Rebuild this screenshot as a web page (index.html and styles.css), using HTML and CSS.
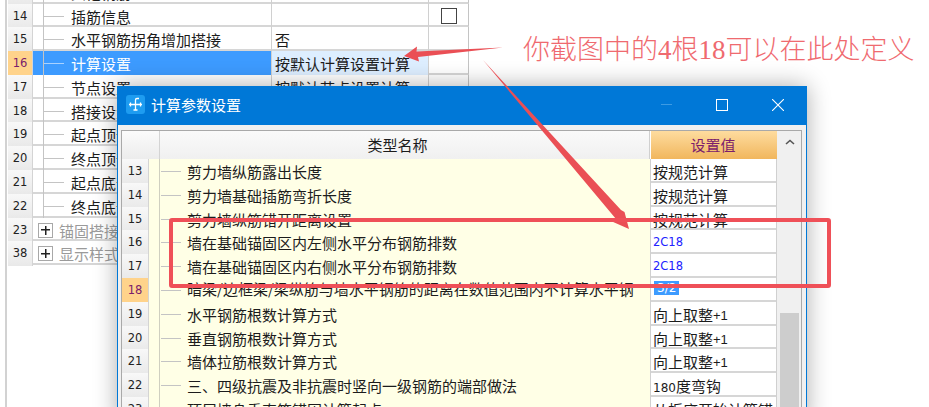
FILE: index.html
```html
<!DOCTYPE html>
<html lang="zh">
<head>
<meta charset="utf-8">
<title>计算参数设置</title>
<link rel="stylesheet" href="styles.css">
</head>
<body>
<main class="panel">
  <div class="row"><div class="num">13</div><div class="tree"></div><div class="name"><i class="branch"></i>其他钢筋</div><div class="val"></div><div class="chk"><span class="box"></span></div></div>
  <div class="row"><div class="num">14</div><div class="tree"></div><div class="name"><i class="branch"></i>插筋信息</div><div class="val"></div><div class="chk"><span class="box"></span></div></div>
  <div class="row"><div class="num">15</div><div class="tree"></div><div class="name"><i class="branch"></i>水平钢筋拐角增加搭接</div><div class="val">否</div><div class="chk"></div></div>
  <div class="row active"><div class="num">16</div><div class="tree"></div><div class="name"><i class="branch"></i>计算设置</div><div class="val">按默认计算设置计算</div><div class="chk"></div></div>
  <div class="row"><div class="num">17</div><div class="tree"></div><div class="name"><i class="branch"></i>节点设置</div><div class="val">按默认节点设置计算</div><div class="chk"></div></div>
  <div class="row"><div class="num">18</div><div class="tree"></div><div class="name"><i class="branch"></i>搭接设置</div><div class="val"></div><div class="chk"></div></div>
  <div class="row"><div class="num">19</div><div class="tree"></div><div class="name"><i class="branch"></i>起点顶部加强</div><div class="val"></div><div class="chk"></div></div>
  <div class="row"><div class="num">20</div><div class="tree"></div><div class="name"><i class="branch"></i>终点顶部加强</div><div class="val"></div><div class="chk"></div></div>
  <div class="row"><div class="num">21</div><div class="tree"></div><div class="name"><i class="branch"></i>起点底部加强</div><div class="val"></div><div class="chk"></div></div>
  <div class="row"><div class="num">22</div><div class="tree"></div><div class="name"><i class="branch"></i>终点底部加强</div><div class="val"></div><div class="chk"></div></div>
  <div class="row group"><div class="num">23</div><div class="grp"><span class="plus"></span>锚固搭接设置</div></div>
  <div class="row group"><div class="num">38</div><div class="grp"><span class="plus"></span>显示样式设置</div></div>
</main>

<section class="dialog">
  <header class="titlebar">
    <svg class="appicon" viewBox="0 0 19 19" width="19" height="19" aria-hidden="true">
      <rect width="19" height="19" rx="3" fill="#1e9cf0"/>
      <path d="M13 3.5H11Q9.5 3.5 9.5 5V15M3 9.5H16M4.5 7.5V11.5M14.5 7.5V11.5M7.5 15H11.5" fill="none" stroke="#fff" stroke-width="1.3"/>
    </svg>
    <span class="title">计算参数设置</span>
    <span class="winbtn"><i class="min"></i></span>
    <span class="winbtn"><i class="max"></i></span>
    <span class="winbtn">
      <svg viewBox="0 0 12 12" width="12" height="12" aria-hidden="true"><path d="M0 0L12 12M12 0L0 12" stroke="#fff" stroke-width="1.1"/></svg>
    </span>
  </header>
  <div class="body">
    <div class="grid">
      <div class="table">
        <div class="drow head"><div class="hnum"></div><div class="hname">类型名称</div><div class="hval">设置值</div></div>
        <div class="drow"><div class="num">13</div><div class="tree"></div><div class="dname"><i class="branch"></i>剪力墙纵筋露出长度</div><div class="dval">按规范计算</div></div>
        <div class="drow"><div class="num">14</div><div class="tree"></div><div class="dname"><i class="branch"></i>剪力墙基础插筋弯折长度</div><div class="dval">按规范计算</div></div>
        <div class="drow"><div class="num">15</div><div class="tree"></div><div class="dname"><i class="branch"></i>剪力墙纵筋错开距离设置</div><div class="dval">按规范计算</div></div>
        <div class="drow"><div class="num">16</div><div class="tree"></div><div class="dname"><i class="branch"></i>墙在基础锚固区内左侧水平分布钢筋排数</div><div class="dval blue">2C18</div></div>
        <div class="drow"><div class="num">17</div><div class="tree"></div><div class="dname"><i class="branch"></i>墙在基础锚固区内右侧水平分布钢筋排数</div><div class="dval blue">2C18</div></div>
        <div class="drow current"><div class="num">18</div><div class="tree"></div><div class="dname"><i class="branch"></i>暗梁/边框梁/梁纵筋与墙水平钢筋的距离在数值范围内不计算水平钢</div><div class="dval"><span class="sel">3/2</span></div></div>
        <div class="drow"><div class="num">19</div><div class="tree"></div><div class="dname"><i class="branch"></i>水平钢筋根数计算方式</div><div class="dval">向上取整<span class="inc">+1</span></div></div>
        <div class="drow"><div class="num">20</div><div class="tree"></div><div class="dname"><i class="branch"></i>垂直钢筋根数计算方式</div><div class="dval">向上取整<span class="inc">+1</span></div></div>
        <div class="drow"><div class="num">21</div><div class="tree"></div><div class="dname"><i class="branch"></i>墙体拉筋根数计算方式</div><div class="dval">向上取整<span class="inc">+1</span></div></div>
        <div class="drow"><div class="num">22</div><div class="tree"></div><div class="dname"><i class="branch"></i>三、四级抗震及非抗震时竖向一级钢筋的端部做法</div><div class="dval"><span class="deg">180</span>度弯钩</div></div>
        <div class="drow"><div class="num">23</div><div class="tree"></div><div class="dname"><i class="branch"></i>顶层墙身垂直筋锚固计算起点</div><div class="dval">从板底开始计算锚</div></div>
      </div>
      <div class="scrollbar">
        <svg class="up" viewBox="0 0 10 6" width="10" height="6" aria-hidden="true"><path d="M1 5L5 1.5L9 5" fill="none" stroke="#555" stroke-width="1.6"/></svg>
        <div class="thumb"></div>
      </div>
    </div>
  </div>
</section>

<svg class="marks" viewBox="0 0 929 407" width="929" height="407" aria-hidden="true">
  <polygon points="404,56 417,46.5 416.5,51.5 503,47.5 418,57 419,61.5" fill="#ea4f55"/>
  <polygon points="483,60 621,210 624.5,212 629,229 612,221.5 616,219" fill="#ea4f55"/>
  <rect x="171" y="220" width="658" height="66" rx="1" fill="none" stroke="#ef5058" stroke-width="4"/>
</svg>
<p class="note">你截图中的4根18可以在此处定义</p>
</body>
</html>
```
FILE: styles.css
```css
html, body {
  margin: 0;
  height: 407px;
  overflow: hidden;
  background: #fff;
}
body {
  position: relative;
  font-family: "Noto Sans CJK SC", "Liberation Sans", sans-serif;
  font-size: 15px;
  color: #1c1c1c;
}
.panel {
  width: 461px;
  height: 430px;
  margin: -20.3px 0 0 5px;
  padding-left: 1px;
  border-left: 2px solid #d2d2d2;
}
.row {
  display: grid;
  grid-template-columns: 25px 11px 228px 157px 39px;
  height: 23.8px;
  box-sizing: border-box;
  border-bottom: 2px solid #d6d6d6;
  line-height: 25px;
  border-right: 1px solid #c4c4c4;
}
.num {
  background: linear-gradient(#f8f8f8, #e9e9e9);
  border-right: 1px solid #d4d4d4;
  text-align: center;
  font-family: "DejaVu Sans", sans-serif;
  font-size: 11.5px;
  line-height: 24px;
  color: #222;
}
.tree {
  border-right: 1px solid #c4c4c4;
}
.name {
  position: relative;
  padding-left: 27px;
  white-space: nowrap;
  overflow: hidden;
  border-right: 1px solid #d0d0d0;
}
.branch {
  position: absolute;
  left: 0;
  top: 12px;
  width: 20px;
  height: 1px;
  background: #c4c4c4;
}
.val {
  padding-left: 3px;
  border-right: 1px solid #d0d0d0;
  white-space: nowrap;
  overflow: hidden;
}
.chk {
  display: flex;
  align-items: center;
  justify-content: center;
}
.box {
  width: 14px;
  height: 14px;
  border: 1px solid #444;
}
.active .num {
  background: #ffd38b;
  color: #7b1d6c;
}
.active .tree,
.active .name {
  background: #3d9bff;
  color: #fff;
}
.active .branch {
  background: #a9d2ff;
}
.active .val {
  background: #ddeeff;
}
.group {
  grid-template-columns: 25px 1fr;
}
.grp {
  display: flex;
  align-items: center;
  gap: 6px;
  padding-left: 5px;
  color: #9a9a9a;
  white-space: nowrap;
}
.plus {
  width: 13px;
  height: 13px;
  border: 1px solid #a8a8a8;
  background:
    linear-gradient(#222, #222) center / 9px 1.5px no-repeat,
    linear-gradient(#222, #222) center / 1.5px 9px no-repeat,
    #fff;
}

.dialog {
  position: absolute;
  left: 117px;
  top: 86px;
  width: 690px;
  height: 340px;
  box-sizing: border-box;
  display: flex;
  flex-direction: column;
  border: 1px solid #0078d7;
  border-top: 0;
  background: #f0f0f0;
  box-shadow: 0 0 22px rgba(0, 0, 0, .32);
}
.titlebar {
  height: 39px;
  flex: none;
  display: flex;
  align-items: center;
  padding: 0 1px 0 9px;
  margin: 0 -1px;
  background: #0078d7;
  color: #fff;
}
.appicon {
  flex: none;
  margin-top: -2px;
}
.title {
  margin: -2px auto 0 6px;
  line-height: 37px;
}
.winbtn {
  width: 56px;
  height: 39px;
  display: flex;
  align-items: center;
  justify-content: center;
  margin-top: -2px;
}
.min {
  width: 11px;
  height: 1px;
  background: #3d9be3;
}
.max {
  width: 10px;
  height: 10px;
  border: 1px solid #fff;
}
.body {
  flex: 1;
  padding: 5px 4px 0 3px;
  min-height: 0;
}
.grid {
  display: flex;
  height: 100%;
  box-sizing: border-box;
  border: 1px solid #a9a9a9;
  background: #f4f4f4;
}
.table {
  width: 655px;
  flex: none;
  background: #fff;
}
.drow {
  display: grid;
  grid-template-columns: 27px 11px 490px 127px;
  height: 23.8px;
  box-sizing: border-box;
  border-bottom: 2px solid #d6d6d6;
  line-height: 25px;
}
.drow .num {
  line-height: 25px;
}
.drow .tree {
  background: #ffffe6;
  border-right-color: #cfcfc0;
}
.drow.head {
  height: 28px;
  grid-template-columns: 38px 490px 127px;
  border-bottom-width: 1px;
  line-height: 28px;
  text-align: center;
}
.hnum {
  background: linear-gradient(#fbfbfb, #ececec);
  border-right: 1px solid #d4d4d4;
}
.hname {
  background: linear-gradient(#fafafa, #f0f0f0);
  border-right: 1px solid #d0d0d0;
  padding-right: 14px;
}
.hval {
  background: linear-gradient(#fedc9f, #f1b65d);
  color: #7b1d6c;
  border-left: 1px solid #fff;
  padding-right: 2px;
}
.dname {
  position: relative;
  padding-left: 27px;
  background: #ffffe6;
  white-space: nowrap;
  overflow: hidden;
}
.dname .branch {
  left: 1px;
}
.current .dname {
  line-height: 21px;
}
.dval {
  padding-left: 2px;
  border-left: 1px solid #d0d0d0;
  border-right: 1px solid #d0d0d0;
  white-space: nowrap;
  overflow: hidden;
}
.blue {
  color: #2222ff;
  font-family: "DejaVu Sans", sans-serif;
  font-size: 11.5px;
}
.inc {
  font-family: "Liberation Sans", sans-serif;
  font-size: 13px;
  position: relative;
  top: -1px;
}
.deg {
  font-family: "DejaVu Sans", sans-serif;
  font-size: 12px;
}
.sel {
  display: inline-block;
  background: #3d9bff;
  color: #fff;
  font-family: "DejaVu Sans", sans-serif;
  font-size: 12px;
  line-height: 14px;
  padding: 0 3px;
  margin: 3px 0 0 1px;
  vertical-align: top;
}
.current .num {
  background: #ffd38b;
  color: #7b1d6c;
}
.scrollbar {
  flex: 1;
  display: flex;
  flex-direction: column;
  align-items: center;
  padding: 8px 2px 0 3px;
  background: #f0f0f0;
}
.up {
  flex: none;
}
.thumb {
  width: 100%;
  height: 100px;
  margin-top: 168px;
  background: #cdcdcd;
}

.marks {
  position: absolute;
  left: 0;
  top: 0;
  pointer-events: none;
}
.note {
  position: absolute;
  left: 523px;
  top: 30px;
  margin: 0;
  font-family: "Liberation Serif", "Noto Sans CJK SC", serif;
  font-size: 27px;
  line-height: 40px;
  font-weight: 300;
  color: #ef6a6f;
  white-space: nowrap;
}
```
